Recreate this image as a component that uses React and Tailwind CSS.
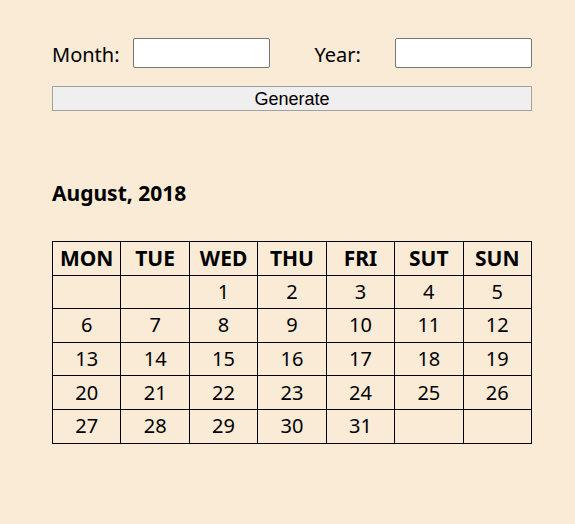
const weeks = [
  ['', '', 1, 2, 3, 4, 5],
  [6, 7, 8, 9, 10, 11, 12],
  [13, 14, 15, 16, 17, 18, 19],
  [20, 21, 22, 23, 24, 25, 26],
  [27, 28, 29, 30, 31, '', ''],
]

const days = ['MON', 'TUE', 'WED', 'THU', 'FRI', 'SUT', 'SUN']

export default function App() {
  return (
    <div className="min-h-[524px] bg-[#faebd7] text-black font-['Noto_Sans',sans-serif]">
      <div className="w-[480px] ml-[52px] pt-[38px]">
        <div className="grid grid-cols-2 gap-[45px]">
          <div className="flex items-center justify-between">
            <label className="text-[20px] leading-none pt-[3px]">Month:</label>
            <input className="w-[137px] h-[30px] bg-white border border-[#767676] rounded-[2px]" />
          </div>
          <div className="flex items-center justify-between">
            <label className="text-[20px] leading-none pt-[3px]">Year:</label>
            <input className="w-[137px] h-[30px] bg-white border border-[#767676] rounded-[2px]" />
          </div>
        </div>
        <button className="mt-[18px] w-full h-[25px] bg-[#efefef] border border-[#a0a0a0] text-[18px] leading-none font-['Liberation_Sans',sans-serif]">
          Generate
        </button>

        <h2 className="mt-[70px] text-[21px] font-bold leading-[24px]">August, 2018</h2>

        <table className="mt-[36px] w-full border-collapse table-fixed">
          <thead>
            <tr>
              {days.map((d) => (
                <th key={d} className="border border-black h-[33.6px] text-[21px] font-bold p-0">{d}</th>
              ))}
            </tr>
          </thead>
          <tbody>
            {weeks.map((w, i) => (
              <tr key={i}>
                {w.map((n, j) => (
                  <td key={j} className="border border-black h-[33.6px] text-[20px] text-center p-0">{n}</td>
                ))}
              </tr>
            ))}
          </tbody>
        </table>
      </div>
    </div>
  )
}
